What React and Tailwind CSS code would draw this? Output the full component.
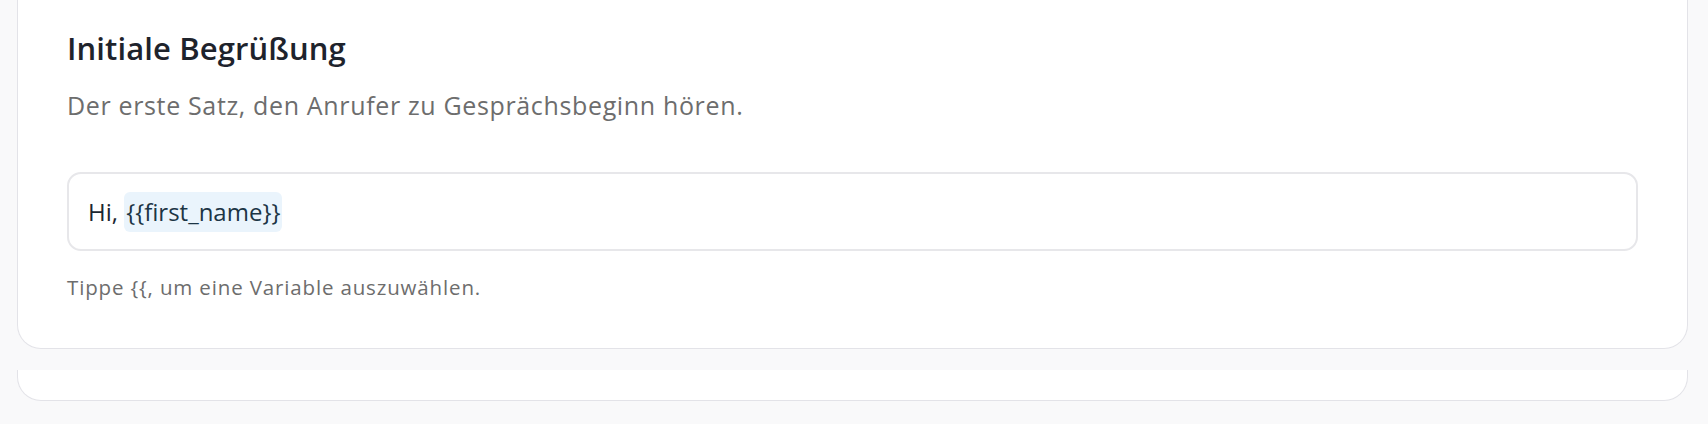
export default function App() {
  return (
    <div className="h-[424px] overflow-hidden bg-[#f9f9fa] pl-[17px] pr-[20px] font-['Open_Sans',_'Liberation_Sans',_sans-serif]">
      {/* Greeting settings card */}
      <section className="rounded-b-[24px] border-x border-b border-[#e3e3e8] bg-white px-[49px] pt-[30px] pb-[47px]">
        <h2 className="text-[31px] leading-[36px] font-semibold tracking-[0.1px] text-[#1e232c]">Initiale Begrüßung</h2>
        <p className="mt-[23px] text-[25px] leading-[32px] tracking-[0.65px] text-[#6d6d6d]">
          Der erste Satz, den Anrufer zu Gesprächsbeginn hören.
        </p>

        <div className="mt-[51px] flex h-[79px] items-center rounded-[14px] border-2 border-[#e7e7ea] px-[19px] text-[24px] text-[#1b2630]">
          <span>Hi,&nbsp;</span>
          <span className="rounded-[6px] bg-[#eaf4fc] px-[2px] py-[4px] leading-[32px] text-[#1c3545]">{"{{first_name}}"}</span>
        </div>

        <p className="mt-[22px] text-[20.5px] leading-[28px] tracking-[0.85px] text-[#6d6d6d]">
          Tippe {"{{"}, um eine Variable auszuwählen.
        </p>
      </section>

      {/* Next card, scrolled mostly out of view */}
      <div className="mt-[21px] h-[31px] rounded-b-[24px] border-x border-b border-[#e3e3e8] bg-white" />
    </div>
  )
}
